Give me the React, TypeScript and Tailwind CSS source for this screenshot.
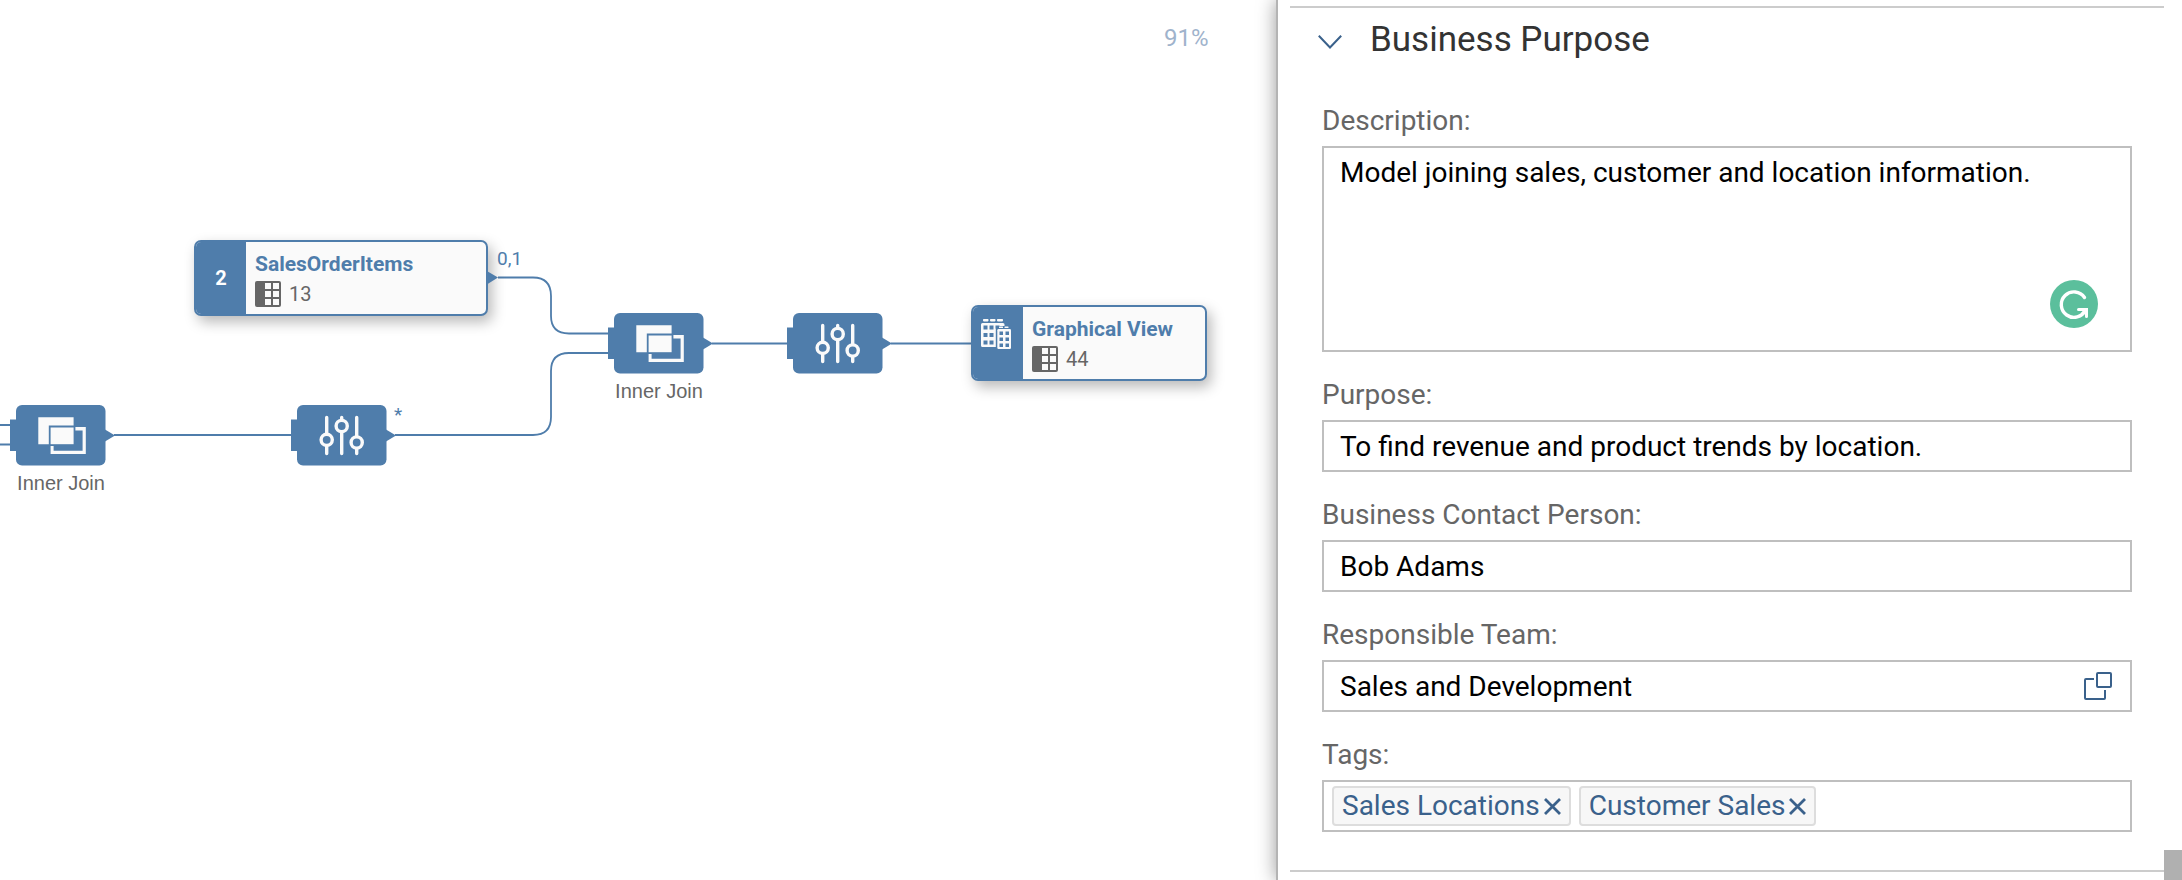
import { useState } from "react";

type Point = { left: string; top: string };

const nodes = {
  items: { left: "194px", top: "240px" },
  view: { left: "971px", top: "305px" },
  joinRight: { left: "608px", top: "313px" },
  filterRight: { left: "787px", top: "313px" },
  joinLeft: { left: "10px", top: "405px" },
  filterLeft: { left: "291px", top: "405px" },
} satisfies Record<string, Point>;

function ColumnsIcon() {
  return (
    <svg className="size-[26px] shrink-0" viewBox="0 0 26 26" aria-hidden="true">
      <rect width="26" height="26" rx="2" fill="#666" />
      <g fill="#fafafa">
        <rect x="10" y="2" width="6" height="6" />
        <rect x="18" y="2" width="6" height="6" />
        <rect x="10" y="10" width="6" height="6" />
        <rect x="18" y="10" width="6" height="6" />
        <rect x="10" y="18" width="6" height="6" />
        <rect x="18" y="18" width="6" height="6" />
      </g>
    </svg>
  );
}

function ViewIcon() {
  return (
    <svg className="h-[30px] w-[30px]" viewBox="0 0 30 30" aria-hidden="true">
      <g fill="#fafafa">
        <rect x="2" y="0" width="5.500" height="2.400" rx="0.800" />
        <rect x="9" y="0" width="5.500" height="2.400" rx="0.800" />
        <rect x="16" y="0" width="6" height="2.400" rx="0.800" />
        <path d="M1.500 4H22q1.500 0 1.500 1.500V8h-6.500v20H1.500q-1.500 0-1.500-1.500V5.500Q0 4 1.500 4Z" />
      </g>
      <g fill="#4f7dab">
        <rect x="2.500" y="6.500" width="4" height="4" />
        <rect x="8.500" y="6.500" width="4" height="4" />
        <rect x="14.500" y="6.500" width="4" height="3" />
        <rect x="2.500" y="14" width="4" height="4" />
        <rect x="8.500" y="14" width="4" height="4" />
        <rect x="2.500" y="21.500" width="4" height="4" />
        <rect x="8.500" y="21.500" width="4" height="4" />
        <path d="M14.800 9H17.500V7H28v2h2v21H14.800Z" />
      </g>
      <g fill="#fafafa">
        <rect x="18" y="7.500" width="4" height="1.600" rx="0.500" />
        <rect x="23.500" y="7.500" width="4" height="1.600" rx="0.500" />
        <rect x="16.300" y="10" width="13.700" height="20" rx="1.200" />
      </g>
      <g fill="#4f7dab">
        <rect x="18.500" y="12.500" width="3.500" height="3.500" />
        <rect x="24.500" y="12.500" width="3.500" height="3.500" />
        <rect x="18.500" y="18.500" width="3.500" height="3.500" />
        <rect x="24.500" y="18.500" width="3.500" height="3.500" />
        <rect x="18.500" y="24.500" width="3.500" height="3.500" />
        <rect x="24.500" y="24.500" width="3.500" height="3.500" />
      </g>
    </svg>
  );
}

function OperatorShape() {
  return (
    <>
      <path d="M0 14.500H7V46H0Z" fill="#4f7dab" />
      <rect x="6" width="89.500" height="60.500" rx="6" fill="#4f7dab" />
      <path d="M95 24.500 105 30.500 95 36.500Z" fill="#4f7dab" />
    </>
  );
}

function JoinNode({ at }: { at: Point }) {
  return (
    <div className="absolute flex w-[105px] flex-col" style={at}>
      <svg className="h-[61px] w-[105px]" viewBox="0 0 105 61" aria-hidden="true">
        <OperatorShape />
        <path d="M28.300 12.200H63.600V20.500H38.800V39.200H28.300Z" fill="#fafafa" />
        <rect x="40.600" y="22.500" width="23" height="16.700" fill="#fafafa" />
        <path d="M65.400 22H75.800V49H40.600V41H43.600V45.800H72.600V25.400H65.400Z" fill="#fafafa" />
      </svg>
      <span className="mt-[5px] ml-[6px] w-[90px] text-center font-['Liberation_Sans',sans-serif] text-xl leading-6 whitespace-nowrap text-[#666]">
        Inner Join
      </span>
    </div>
  );
}

function FilterNode({ at }: { at: Point }) {
  return (
    <svg className="absolute h-[61px] w-[105px]" style={at} viewBox="0 0 105 61" aria-hidden="true">
      <OperatorShape />
      <g stroke="#fafafa" strokeWidth="3.400" strokeLinecap="round" fill="#4f7dab">
        <path d="M35.700 12.500V48.500M50.700 12.500V48.500M65.700 12.500V48.500" />
        <circle cx="35.700" cy="34.800" r="5.600" />
        <circle cx="50.700" cy="21" r="5.600" />
        <circle cx="65.700" cy="37.500" r="5.600" />
      </g>
    </svg>
  );
}

function EntityNode({
  at,
  width,
  title,
  count,
  children,
}: {
  at: Point;
  width: string;
  title: string;
  count: number;
  children: React.ReactNode;
}) {
  return (
    <div
      className={`absolute flex h-[76px] overflow-hidden rounded-[7px] border-2 border-[#4f7dab] bg-[#fafafa] shadow-[4px_6px_14px_rgba(0,0,0,0.28)] ${width}`}
      style={at}
    >
      <div className="flex w-[50px] shrink-0 bg-[#4f7dab] text-white">{children}</div>
      <div className="flex flex-col gap-1 pt-[10px] pl-[9px]">
        <span className="text-[21px] leading-6 font-bold whitespace-nowrap text-[#4f7dab]">{title}</span>
        <span className="flex items-center gap-2 text-xl leading-7 text-[#666]">
          <ColumnsIcon />
          {count}
        </span>
      </div>
    </div>
  );
}

function Canvas() {
  return (
    <main className="relative min-w-0 overflow-hidden bg-white">
      <svg className="absolute top-0 left-0 h-[880px] w-[1276px]" viewBox="0 0 1276 880" aria-hidden="true">
        <g fill="none" stroke="#4f7dab" strokeWidth="1.800">
          <path d="M498 277.500H533C545 277.500 551 284 551 296V316C551 328 557 333.500 569 333.500H608" />
          <path d="M395 435H533C545 435 551 429 551 417V371C551 359 557 353 569 353H608" />
          <path d="M712 343.500H787M891 343.500H971M114 435H291M0 425H10M0 444.500H10" />
        </g>
      </svg>
      <span className="absolute top-6 left-[1164px] text-2xl leading-7 text-[#9fb3cc]">91%</span>
      <EntityNode at={nodes.items} width="w-[294px]" title="SalesOrderItems" count={13}>
        <span className="w-full self-center text-center text-xl font-bold">2</span>
      </EntityNode>
      <svg className="absolute top-[270px] left-[486px] h-4 w-3" viewBox="0 0 12 16" aria-hidden="true">
        <path d="M0 0.500 12 7.500 0 15Z" fill="#4f7dab" />
      </svg>
      <span className="absolute top-[247px] left-[497px] text-[19px] leading-6 text-[#4f7dab]">0,1</span>
      <span className="absolute top-[403px] left-[394px] text-[19px] leading-6 text-[#4f7dab]">*</span>
      <JoinNode at={nodes.joinRight} />
      <FilterNode at={nodes.filterRight} />
      <JoinNode at={nodes.joinLeft} />
      <FilterNode at={nodes.filterLeft} />
      <EntityNode at={nodes.view} width="w-[236px]" title="Graphical View" count={44}>
        <span className="pt-3 pl-2">
          <ViewIcon />
        </span>
      </EntityNode>
    </main>
  );
}

const fieldClass = "flex flex-col gap-[9px]";
const labelClass = "block text-[28px] leading-8 text-[#666]";
const inputClass =
  "block h-[52px] w-full border-2 border-[#bfbfbf] bg-white px-4 text-[28px] leading-8 text-black outline-none focus:border-[#4f7dab]";

function Tag({ text, onRemove }: { text: string; onRemove: () => void }) {
  return (
    <span className="flex h-10 items-center gap-1 rounded border-2 border-[#ddd] bg-[#f7f7f7] px-2 text-[28px] leading-8 whitespace-nowrap text-[#3a618b]">
      {text}
      <button type="button" aria-label={`Remove ${text}`} onClick={onRemove} className="cursor-pointer">
        <svg className="size-[17px]" viewBox="0 0 17 17" aria-hidden="true">
          <path d="M1 1 16 16M16 1 1 16" stroke="#3a618b" strokeWidth="2.800" />
        </svg>
      </button>
    </span>
  );
}

function PropertiesPanel() {
  const [open, setOpen] = useState(true);
  const [tags, setTags] = useState(["Sales Locations", "Customer Sales"]);
  return (
    <aside className="relative z-10 flex border-l-2 border-[#b4b4b4] bg-white shadow-[0_0_18px_rgba(0,0,0,0.4)]">
      <section className="mt-[6px] mb-2 ml-3 min-w-0 flex-1 border-y-2 border-[#ccc]">
        <h2 className="flex h-16 items-center gap-7 pl-7 text-[35px] leading-[44px] text-[#333]">
          <button
            type="button"
            aria-label="Toggle Business Purpose"
            aria-expanded={open}
            onClick={() => setOpen(!open)}
            className="cursor-pointer pt-1"
          >
            <svg className="h-[14px] w-6" viewBox="0 0 24 14" aria-hidden="true">
              <path d="M0.800 0.800 12 12.500 23.200 0.800" fill="none" stroke="#3a618b" strokeWidth="2" />
            </svg>
          </button>
          Business Purpose
        </h2>
        {open && (
          <form className="flex flex-col gap-[27px] px-8 pt-[33px]">
            <div className={fieldClass}>
              <label htmlFor="description" className={labelClass}>
                Description:
              </label>
              <div className="relative">
                <textarea
                  id="description"
                  defaultValue="Model joining sales, customer and location information."
                  className="block h-[206px] w-full resize-none border-2 border-[#bfbfbf] bg-white px-4 pt-[9px] text-[28px] leading-8 text-black outline-none focus:border-[#4f7dab]"
                />
                <svg className="absolute right-[34px] bottom-6 size-12" viewBox="0 0 48 48" aria-hidden="true">
                  <circle cx="24" cy="24" r="24" fill="#5bbf9c" />
                  <path
                    d="M34.500 17.500A12.700 12.700 0 1 0 35.500 30"
                    fill="none"
                    stroke="#fff"
                    strokeWidth="3.400"
                    strokeLinecap="round"
                  />
                  <path d="M28.500 29.500H36.500V36.500M36 30 32.500 33.500" fill="none" stroke="#fff" strokeWidth="3" strokeLinecap="round" />
                </svg>
              </div>
            </div>
            <div className={fieldClass}>
              <label htmlFor="purpose" className={labelClass}>
                Purpose:
              </label>
              <input id="purpose" defaultValue="To find revenue and product trends by location." className={inputClass} />
            </div>
            <div className={fieldClass}>
              <label htmlFor="contact" className={labelClass}>
                Business Contact Person:
              </label>
              <input id="contact" defaultValue="Bob Adams" className={inputClass} />
            </div>
            <div className={fieldClass}>
              <label htmlFor="team" className={labelClass}>
                Responsible Team:
              </label>
              <div className="relative">
                <input id="team" defaultValue="Sales and Development" className={inputClass} />
                <button type="button" aria-label="Select team" className="absolute top-3 right-5 cursor-pointer">
                  <svg className="size-7" viewBox="0 0 28 28" fill="none" stroke="#3a618b" strokeWidth="2" aria-hidden="true">
                    <rect x="13" y="1" width="14" height="14" rx="1" />
                    <path d="M10 7H2Q1 7 1 8V26Q1 27 2 27H20Q21 27 21 26V18" />
                  </svg>
                </button>
              </div>
            </div>
            <div className={fieldClass}>
              <label htmlFor="tags" className={labelClass}>
                Tags:
              </label>
              <div className="flex h-[52px] items-center gap-2 border-2 border-[#bfbfbf] px-2">
                {tags.map((tag) => (
                  <Tag key={tag} text={tag} onRemove={() => setTags(tags.filter((t) => t !== tag))} />
                ))}
                <input id="tags" className="h-10 min-w-0 flex-1 text-[28px] outline-none" />
              </div>
            </div>
          </form>
        )}
      </section>
      <div className="flex w-[18px] shrink-0 flex-col justify-end">
        <div className="h-[30px] bg-[#b0b0b0]" />
      </div>
    </aside>
  );
}

export default function App() {
  return (
    <div className="grid min-h-screen grid-cols-[minmax(0,1fr)_906px] overflow-hidden bg-white font-[Roboto,sans-serif]">
      <Canvas />
      <PropertiesPanel />
    </div>
  );
}
